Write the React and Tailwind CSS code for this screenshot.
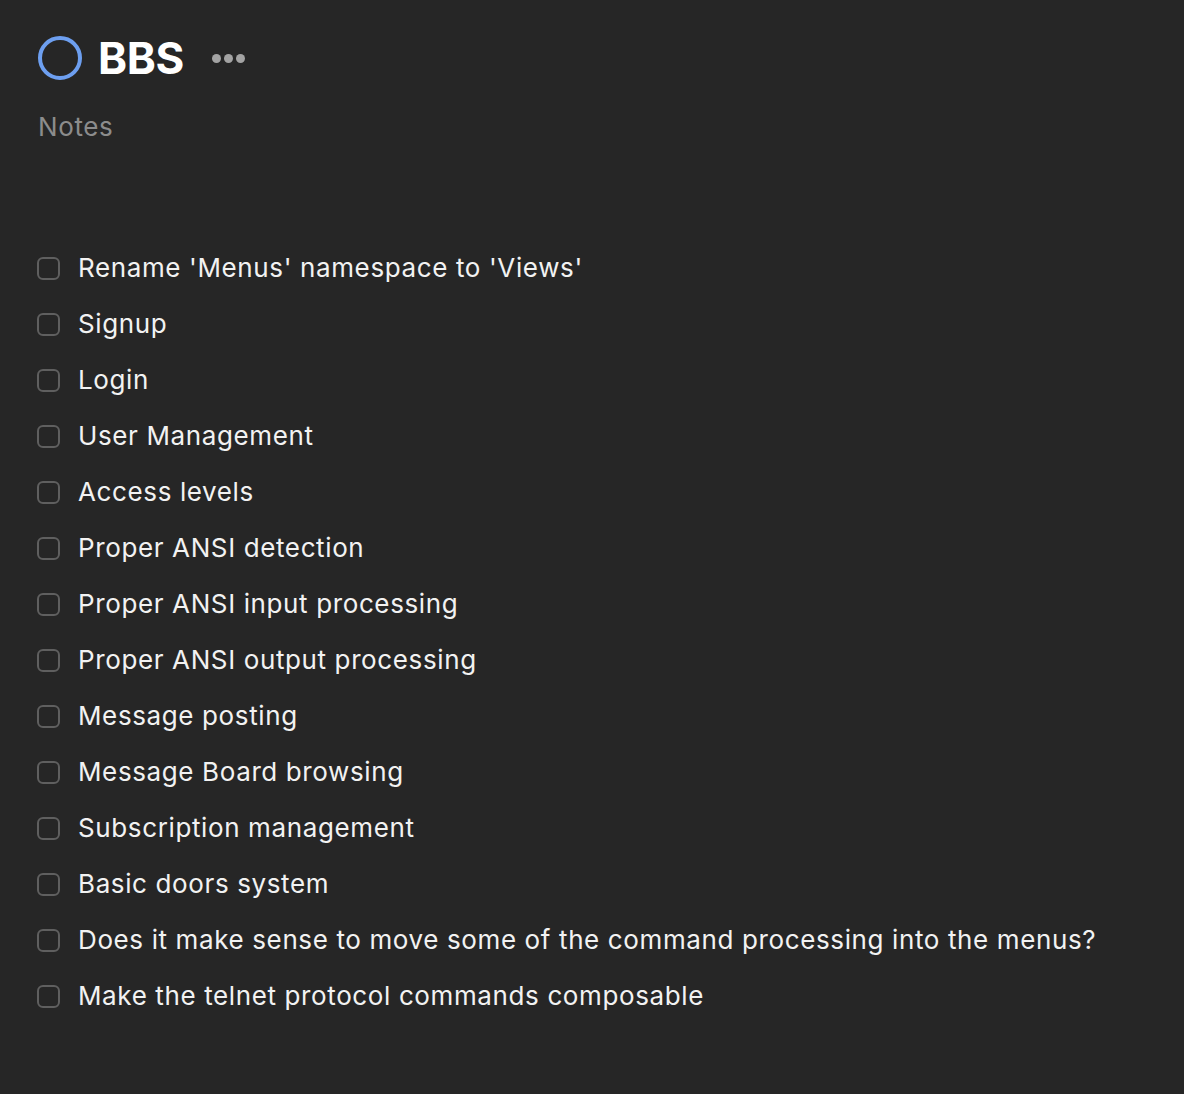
import React from 'react';

const tasks = [
  "Rename 'Menus' namespace to 'Views'",
  'Signup',
  'Login',
  'User Management',
  'Access levels',
  'Proper ANSI detection',
  'Proper ANSI input processing',
  'Proper ANSI output processing',
  'Message posting',
  'Message Board browsing',
  'Subscription management',
  'Basic doors system',
  'Does it make sense to move some of the command processing into the menus?',
  'Make the telnet protocol commands composable',
];

const TaskRow = ({ title }) => (
  <div className="flex items-center h-[56px]">
    <div className="w-[23px] h-[23px] rounded-[6px] border-2 border-[#5f5f5f] shrink-0 ml-[37px]" />
    <span className="ml-[18px] text-[26px] tracking-[0.62px] text-[#f2f2f2] leading-none">{title}</span>
  </div>
);

export default function App() {
  return (
    <div className="min-h-[1094px] bg-[#262626] font-['Inter',sans-serif] pt-[36px]">
      {/* Header */}
      <div className="flex items-center pl-[38px] h-[44px]">
        <div className="w-[44px] h-[44px] rounded-full border-4 border-[#6d9ff0] shrink-0" />
        <h1 className="ml-[16px] text-[44px] font-bold text-white leading-none tracking-[-0.3px]">BBS</h1>
        <div className="flex gap-[3px] ml-[28px]">
          <span className="w-[9px] h-[9px] rounded-full bg-[#a3a3a3]" />
          <span className="w-[9px] h-[9px] rounded-full bg-[#a3a3a3]" />
          <span className="w-[9px] h-[9px] rounded-full bg-[#a3a3a3]" />
        </div>
      </div>
      <p className="pl-[38px] mt-[34px] text-[26px] tracking-[0.6px] text-[#8c8c8c] leading-none">Notes</p>

      {/* Checklist */}
      <div className="mt-[100px]">
        {tasks.map((t) => (
          <TaskRow key={t} title={t} />
        ))}
      </div>
    </div>
  );
}
